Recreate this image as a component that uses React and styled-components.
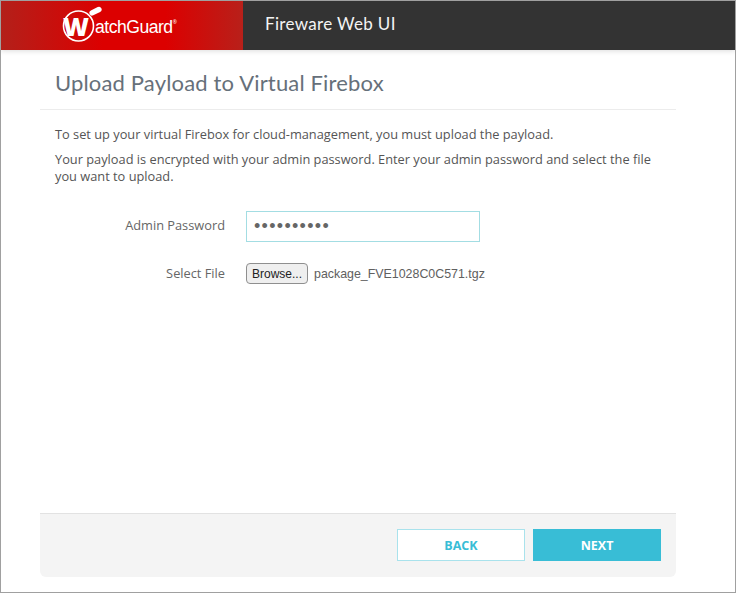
import styled, { createGlobalStyle } from "styled-components";

const GlobalStyle = createGlobalStyle`
  html, body {
    margin: 0;
    padding: 0;
    background: #fff;
  }
  * { box-sizing: border-box; }
`;

const App = () => {
  return (
    <>
      <GlobalStyle />
      <Frame>
        <Header>
          <Brand>
            <LogoMark>
              <svg width="42" height="36" viewBox="0 0 42 36">
                <circle cx="16.5" cy="20" r="15" fill="none" stroke="#fff" strokeWidth="1.6" />
                <rect x="27" y="2.5" width="13" height="5.4" rx="2.7" fill="#fff" transform="rotate(-26 33.5 5.2)" />
              </svg>
              <LogoW>W</LogoW>
            </LogoMark>
            <LogoText>atchGuard</LogoText>
            <LogoTm>®</LogoTm>
          </Brand>
          <ProductName>Fireware Web UI</ProductName>
        </Header>
        <Page>
          <TitleBar>
            <Title>Upload Payload to Virtual Firebox</Title>
          </TitleBar>
          <Content>
            <Intro>To set up your virtual Firebox for cloud-management, you must upload the payload.</Intro>
            <Intro>
              Your payload is encrypted with your admin password. Enter your admin password and select the file
              you want to upload.
            </Intro>
            <Form>
              <FormRow>
                <Label $lift={4}>Admin Password</Label>
                <PasswordBox type="password" defaultValue="1234567890" />
              </FormRow>
              <FormRow>
                <Label $lift={2}>Select File</Label>
                <BrowseButton type="button">Browse...</BrowseButton>
                <FileName>package_FVE1028C0C571.tgz</FileName>
              </FormRow>
            </Form>
          </Content>
          <Footer>
            <BackButton>BACK</BackButton>
            <NextButton>NEXT</NextButton>
          </Footer>
        </Page>
      </Frame>
    </>
  );
};

const Frame = styled.div`
  width: 736px;
  height: 593px;
  display: flex;
  flex-direction: column;
  border: 1px solid #a0a0a0;
  background: #fff;
  font-family: "Open Sans", sans-serif;
  color: #555;
  overflow: hidden;
`;

const Header = styled.header`
  height: 49px;
  flex: none;
  display: flex;
  background: #333;
  box-shadow: 0 1px 5px rgba(0, 0, 0, 0.14);
`;

const Brand = styled.div`
  width: 242px;
  flex: none;
  display: flex;
  align-items: center;
  padding-left: 61px;
  color: #fff;
  background: linear-gradient(90deg, #b3201a 0%, #dc0000 42%, #dc0000 68%, #b8201a 100%);
`;

const LogoMark = styled.div`
  position: relative;
  width: 33px;
  height: 36px;
  flex: none;
  margin-top: -3px;

  svg {
    position: absolute;
    left: 0;
    top: 0;
  }
`;

const LogoW = styled.span`
  position: absolute;
  left: 1px;
  top: 7px;
  font-family: "Open Sans", sans-serif;
  font-size: 25px;
  line-height: 26px;
  font-weight: 800;
  letter-spacing: -1px;
`;

const LogoText = styled.span`
  margin-top: 4px;
  font-family: "Liberation Sans", sans-serif;
  font-size: 17.6px;
  letter-spacing: -0.5px;
`;

const LogoTm = styled.span`
  font-size: 5px;
  margin-top: -8px;
`;

const ProductName = styled.div`
  margin-left: 22px;
  line-height: 46px;
  font-family: "Lato", sans-serif;
  font-size: 17px;
  letter-spacing: 0.33px;
  color: #f4f4f4;
`;

const Page = styled.main`
  width: 636px;
  margin-left: 39px;
  flex: 1;
  display: flex;
  flex-direction: column;
  padding-bottom: 15px;
`;

const TitleBar = styled.div`
  height: 60px;
  flex: none;
  padding-left: 15px;
  border-bottom: 1px solid #ececec;
`;

const Title = styled.h1`
  margin: 0;
  padding-top: 18px;
  font-family: "Lato", sans-serif;
  font-size: 22px;
  line-height: 30px;
  font-weight: 400;
  letter-spacing: 0.16px;
  color: #66707a;
`;

const Content = styled.div`
  flex: 1;
  padding: 16px 15px 0;
`;

const Intro = styled.p`
  margin: 0 0 7px;
  font-size: 12.8px;
  line-height: 17.5px;
  color: #555;
`;

const Form = styled.div`
  margin-top: 25.5px;
  display: flex;
  flex-direction: column;
  gap: 16px;
`;

const FormRow = styled.div`
  display: flex;
  align-items: center;
  min-height: 31px;
`;

const Label = styled.label`
  width: 170px;
  margin-right: 21px;
  padding-bottom: ${(p) => p.$lift}px;
  flex: none;
  text-align: right;
  font-size: 12.8px;
  color: #666;
`;

const PasswordBox = styled.input`
  width: 234px;
  height: 31px;
  padding: 0 7px;
  border: 1px solid #a3dde3;
  outline: none;
  font-size: 18px;
  letter-spacing: 1.3px;
  color: #666;
  background: #fff;
`;

const BrowseButton = styled.button`
  height: 21px;
  width: 62px;
  padding: 0;
  border: 1px solid #8f8f8f;
  border-radius: 4px;
  background: #efefef;
  font-family: "Liberation Sans", sans-serif;
  font-size: 12px;
  color: #222;
`;

const FileName = styled.span`
  margin-left: 6px;
  font-family: "Liberation Sans", sans-serif;
  font-size: 12.4px;
  color: #606060;
`;

const Footer = styled.footer`
  height: 64px;
  flex: none;
  display: flex;
  justify-content: flex-end;
  gap: 8px;
  padding: 15px 15px 0 0;
  background: #f4f4f4;
  border-top: 1px solid #e2e2e2;
  border-radius: 0 0 6px 6px;
`;

const BackButton = styled.button`
  width: 128px;
  height: 32px;
  border: 1px solid #a9e2ec;
  background: #fff;
  font-family: "Open Sans", sans-serif;
  font-size: 12.5px;
  font-weight: 700;
  color: #38bdd6;
`;

const NextButton = styled(BackButton)`
  border-color: #38bdd6;
  background: #38bdd6;
  color: #fff;
`;

export default App;
